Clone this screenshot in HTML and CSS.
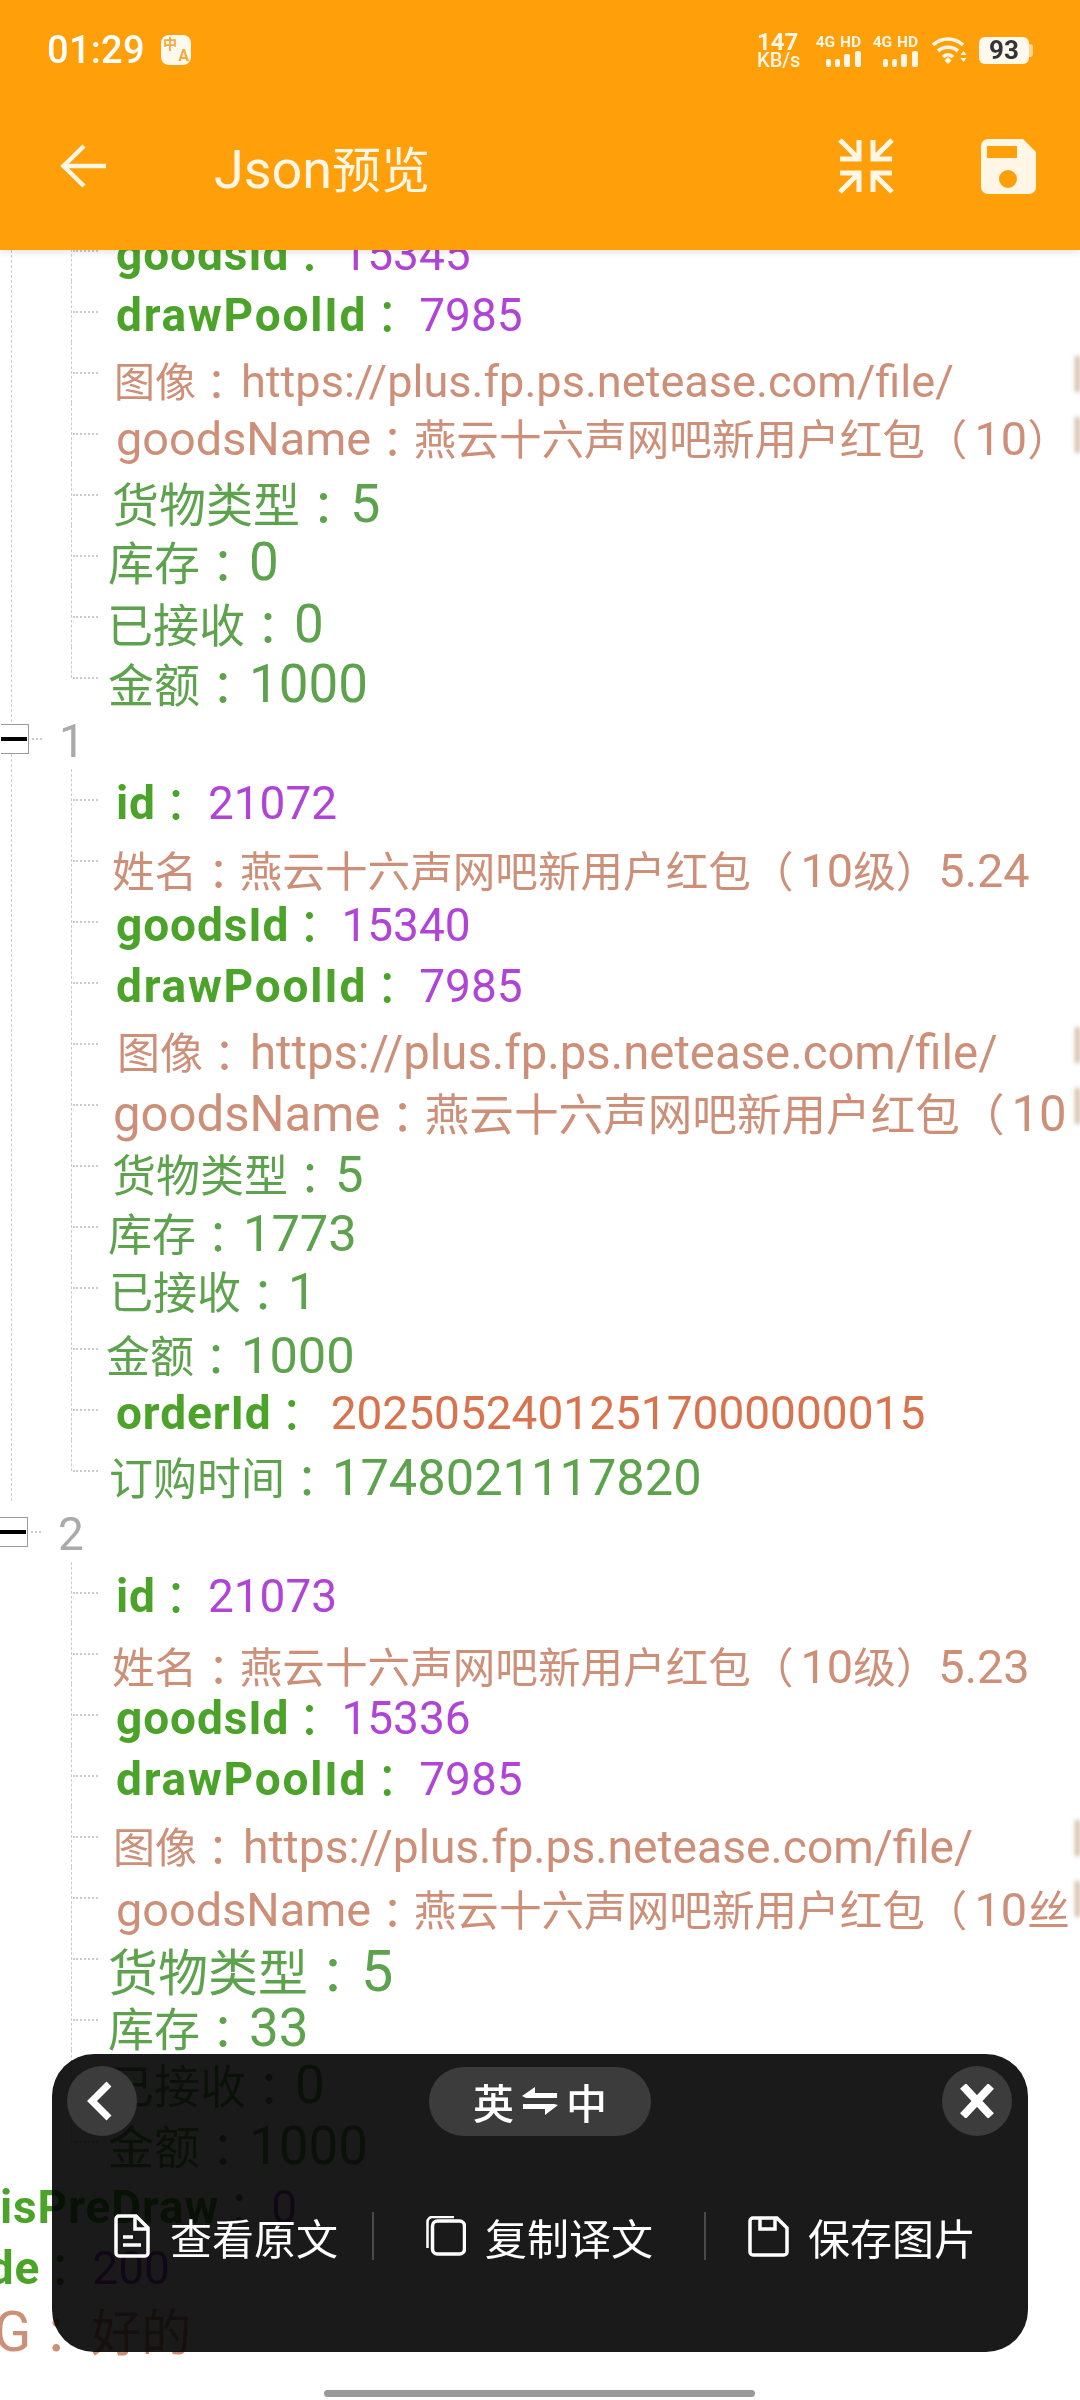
FILE: index.html
```html
<!DOCTYPE html>
<html>
<head>
<meta charset="utf-8">
<title>Json预览</title>
<link rel="stylesheet" href="styles.css">
</head>
<body>
<div class="screen">
  <header class="header">
    <div class="status">
      <span class="time">01:29</span>
      <span class="badge"><i class="bz">中</i><i class="ba">A</i></span>
      <div class="sys">
        <div class="speed"><b>147</b><span>KB/s</span></div>
        <div class="net"><span>4G HD</span>
          <svg class="bars" viewBox="0 0 35 16"><rect x="0" y="8" width="5" height="8" rx="2"/><rect x="9" y="8" width="5" height="8" rx="2"/><rect x="18" y="3" width="6" height="13" rx="2"/><rect x="29" y="0" width="6" height="16" rx="2"/></svg></div>
        <div class="net"><span>4G HD</span>
          <svg class="bars" viewBox="0 0 35 16"><rect x="0" y="8" width="5" height="8" rx="2"/><rect x="9" y="8" width="5" height="8" rx="2"/><rect x="18" y="3" width="6" height="13" rx="2"/><rect x="29" y="0" width="6" height="16" rx="2"/></svg></div>
        <svg class="wifi" viewBox="0 0 37 28"><path d="M2 9C11 1 23 1 32 9M7 15C13 10 21 10 27 15M12 21C15 18 19 18 22 21" fill="none" stroke="#fff6e6" stroke-width="3.6"/><path d="M13.5 24.5 17 21 20.5 24.5 17 28Z" fill="#fff6e6"/><path d="M29.500 19 32.500 15 35.500 19ZM29.500 22 35.500 22 32.500 26Z" fill="#fff6e6"/></svg>
        <div class="batt"><span class="batt-body">93</span><span class="batt-cap"></span></div>
      </div>
    </div>
    <div class="appbar">
      <svg class="ic-back" viewBox="0 0 48 46"><path d="M46 23H4M24 3 3.500 23 24 43" fill="none" stroke="#fff6e6" stroke-width="4.500"/></svg>
      <h1 class="title"><span class="n">Json</span>预览</h1>
      <svg class="ic-compress" viewBox="0 0 56 56"><g fill="none" stroke="#fff6e6" stroke-width="5"><path d="M2 21H21V2M2 2 21 21"/><path d="M54 21H35V2M54 2 35 21"/><path d="M2 35H21V54M2 54 21 35"/><path d="M54 35H35V54M54 54 35 35"/></g></svg>
      <svg class="ic-save" viewBox="0 0 55 55"><path fill-rule="evenodd" fill="#fff6e6" d="M7 0H42L55 13V48A7 7 0 0 1 48 55H7A7 7 0 0 1 0 48V7A7 7 0 0 1 7 0ZM6 7V19H36V7ZM27 31A9 9 0 1 0 27 49 9 9 0 1 0 27 31Z"/></svg>
    </div>
  </header>

  <main class="tree">
    <div class="branch">
      <div class="kids">
        <div class="row p45 d1"><span class="t"><span class="k">goodsId</span><span class="c ck">：</span><span class="v">15345</span></span></div>
        <div class="row p45 d1"><span class="t"><span class="k wide">drawPoolId</span><span class="c ck">：</span><span class="v">7985</span></span></div>
        <div class="row p43 f41 d8 tb"><span class="t">图像<span class="c">：</span><span class="n u">https://plus.fp.ps.netease.com/file/</span></span><span class="edge"></span></div>
        <div class="row p45 f426 d4 tb"><span class="t"><span class="n">goodsName</span><span class="c">：</span>燕云十六声网吧新用户红包（<span class="n lp">10</span>）</span><span class="edge"></span></div>
        <div class="row p41 f47 d8 tg"><span class="t">货物类型<span class="c">：</span><span class="n">5</span></span></div>
        <div class="row p37 f46 d5 tg"><span class="t">库存<span class="c">：</span><span class="n">0</span></span></div>
        <div class="row p36 f46 d6 tg"><span class="t">已接收<span class="c">：</span><span class="n">0</span></span></div>
        <div class="row p37 f46 d5 tg"><span class="t">金额<span class="c">：</span><span class="n">1000</span></span></div>
      </div>
      <div class="node"><span class="box"></span><span class="stub"></span><span class="idx">1</span></div>
      <div class="kids">
        <div class="row p45 d1"><span class="t"><span class="k">id</span><span class="c ck">：</span><span class="v">21072</span></span></div>
        <div class="row p41 f426 d9 tb"><span class="t">姓名<span class="c">：</span>燕云十六声网吧新用户红包（<span class="n lp">10</span>级）<span class="n">5.24</span></span></div>
        <div class="row p45 d1"><span class="t"><span class="k">goodsId</span><span class="c ck">：</span><span class="v">15340</span></span></div>
        <div class="row p45 d1"><span class="t"><span class="k wide">drawPoolId</span><span class="c ck">：</span><span class="v">7985</span></span></div>
        <div class="row p46 f43 d9 tb"><span class="t">图像<span class="c">：</span><span class="n u">https://plus.fp.ps.netease.com/file/</span></span><span class="edge"></span></div>
        <div class="row p42 f446 d9 tb"><span class="t"><span class="n">goodsName</span><span class="c">：</span>燕云十六声网吧新用户红包（<span class="n lp">10</span></span><span class="edge"></span></div>
        <div class="row p41 f44 d8 tg"><span class="t">货物类型<span class="c">：</span><span class="n">5</span></span></div>
        <div class="row p37 f44 d6 tg"><span class="t">库存<span class="c">：</span><span class="n">1773</span></span></div>
        <div class="row p38 f44 d3 tg"><span class="t">已接收<span class="c">：</span><span class="n">1</span></span></div>
        <div class="row p35 f44 d6 tg"><span class="t">金额<span class="c">：</span><span class="n">1000</span></span></div>
        <div class="row p45 d1"><span class="t"><span class="k">orderId</span><span class="c ck">：</span><span class="o">20250524012517000000015</span></span></div>
        <div class="row p38 f44 d6 tg"><span class="t">订购时间<span class="c">：</span><span class="n">1748021117820</span></span></div>
      </div>
    </div>
    <div class="node last"><span class="box"></span><span class="stub"></span><span class="idx">2</span></div>
    <div class="kids top-level">
      <div class="row p45 d1"><span class="t"><span class="k">id</span><span class="c ck">：</span><span class="v">21073</span></span></div>
      <div class="row p41 f426 d12 tb"><span class="t">姓名<span class="c">：</span>燕云十六声网吧新用户红包（<span class="n lp">10</span>级）<span class="n">5.23</span></span></div>
      <div class="row p45 d1"><span class="t"><span class="k">goodsId</span><span class="c ck">：</span><span class="v">15336</span></span></div>
      <div class="row p45 d1"><span class="t"><span class="k wide">drawPoolId</span><span class="c ck">：</span><span class="v">7985</span></span></div>
      <div class="row p42 f42 d9 tb"><span class="t">图像<span class="c">：</span><span class="n u">https://plus.fp.ps.netease.com/file/</span></span><span class="edge"></span></div>
      <div class="row p45 f426 d11 tb"><span class="t"><span class="n">goodsName</span><span class="c">：</span>燕云十六声网吧新用户红包（<span class="n lp">10</span>丝</span><span class="edge"></span></div>
      <div class="row p37 f50 d12 tg"><span class="t">货物类型<span class="c">：</span><span class="n">5</span></span></div>
      <div class="row p37 f46 d7 tg"><span class="t">库存<span class="c">：</span><span class="n">33</span></span></div>
      <div class="row p37 f46 d3 tg"><span class="t">已接收<span class="c">：</span><span class="n">0</span></span></div>
      <div class="row p37 f46 d3 tg"><span class="t">金额<span class="c">：</span><span class="n">1000</span></span></div>
    </div>
    <div class="root-row"><span class="t"><span class="k">isPreDraw</span><span class="c ck">：</span><span class="v">0</span></span></div>
    <div class="root-row clip-code"><span class="t"><span class="k">code</span><span class="c ck">：</span><span class="v">200</span></span></div>
    <div class="root-row clip-msg tb"><span class="t"><span class="n">MSG</span><span class="c cm">：</span>好的</span></div>
  </main>

  <section class="popup">
    <div class="popup-top">
      <span class="round"><svg class="ic-chev" viewBox="0 0 26 40"><path d="M22 3 5 20 22 37" fill="none" stroke="#fff" stroke-width="7"/></svg></span>
      <span class="lang">英<svg class="ic-swap" viewBox="0 0 36 30"><path fill="#fff" d="M0 10 13 1V7H35V12H4ZM36 19 23 29V23H1V18H32Z"/></svg>中</span>
      <span class="round"><svg class="ic-x" viewBox="0 0 34 34"><path d="M3 2 31 32M31 2 3 32" fill="none" stroke="#fff" stroke-width="8"/></svg></span>
    </div>
    <div class="actions">
      <div class="act a1"><svg class="ic-act" viewBox="0 0 36 44"><path d="M5 2H22L34 14V39A3 3 0 0 1 31 42H5A3 3 0 0 1 2 39V5A3 3 0 0 1 5 2ZM21 2V15H34M9 23H19M9 31H27" fill="none" stroke="#fff" stroke-width="3.500"/></svg><span>查看原文</span></div>
      <span class="sep"></span>
      <div class="act a2"><svg class="ic-act copy" viewBox="0 0 40 40"><rect x="6.500" y="5" width="32" height="33" rx="5" fill="none" stroke="#fff" stroke-width="3.500"/><path d="M1.500 32V6A5 5 0 0 1 6.500 1H28" fill="none" stroke="#fff" stroke-width="2.500"/></svg><span>复制译文</span></div>
      <span class="sep"></span>
      <div class="act a3"><svg class="ic-act disk" viewBox="0 0 41 41"><path d="M5 2H29L39 12V36A3 3 0 0 1 36 39H5A3 3 0 0 1 2 36V5A3 3 0 0 1 5 2ZM12 2V13H27V2" fill="none" stroke="#fff" stroke-width="3.500"/></svg><span>保存图片</span></div>
    </div>
  </section>

  <div class="homebar"></div>
</div>
</body>
</html>
```

FILE: styles.css
```css
* { box-sizing: border-box; }
html, body { margin: 0; padding: 0; background: #fff; }
.screen {
  position: relative;
  width: 1080px;
  height: 2400px;
  overflow: hidden;
  background: #fff;
  font-family: Roboto, "Noto Sans CJK SC", sans-serif;
  text-spacing-trim: space-all;
}

/* header */
.header {
  position: relative;
  z-index: 2;
  height: 250px;
  background: #ff9f0a;
  color: #fff6e6;
  box-shadow: 0 3px 6px rgba(0, 0, 0, .1);
}
.status {
  height: 100px;
  display: flex;
  align-items: center;
  padding: 0 47px 0 47px;
}
.time { font-size: 38px; font-weight: 500; color: #fff; letter-spacing: .3px; }
.badge {
  margin-left: 16px;
  width: 30px;
  height: 30px;
  border-radius: 8px;
  background: #fff8ec;
  display: grid;
  grid-template-columns: 1fr 1fr;
  grid-template-rows: 1fr 1fr;
  color: #f6a93c;
  font-weight: 700;
  padding: 3px 2px;
}
.badge i { font-style: normal; line-height: 12px; }
.bz { font-size: 14px; grid-column: 1; grid-row: 1; }
.ba { font-size: 16px; grid-column: 2; grid-row: 2; justify-self: end; }
.sys { margin-left: auto; display: flex; align-items: center; }
.speed { display: flex; flex-direction: column; width: 42px; line-height: 1; margin-top: 0; }
.speed b { font-size: 24px; line-height: 19px; font-weight: 700; }
.speed span { font-size: 20px; line-height: 16px; font-weight: 500; white-space: nowrap; }
.net { display: flex; flex-direction: column; align-items: flex-end; width: 48px; margin-left: 14px; }
.net + .net { margin-left: 9px; }
.net span { font-size: 15.500px; line-height: 16px; font-weight: 700; white-space: nowrap; word-spacing: 1px; }
.bars { width: 35px; height: 16px; fill: #fff6e6; margin-top: 1px; }
.wifi { width: 37px; height: 28px; margin-left: 13px; }
.batt { display: flex; align-items: center; margin-left: 11px; }
.batt-body {
  width: 50px;
  height: 27px;
  border-radius: 6px;
  background: #fff8ec;
  color: #33343a;
  font-size: 26px;
  font-weight: 700;
  line-height: 27px;
  text-align: center;
}
.batt-cap { width: 4px; height: 13px; border-radius: 0 3px 3px 0; background: #ffd68a; }

.appbar { height: 132px; display: flex; align-items: center; padding: 0 44px 0 60px; }
.ic-back { width: 48px; height: 46px; }
.title { margin: 0 0 0 106px; font-size: 49px; font-weight: 400; letter-spacing: 0; }
.ic-compress { width: 56px; height: 56px; margin-left: auto; }
.ic-save { width: 55px; height: 55px; margin-left: 87px; }

/* tree */
.tree { margin-top: -30px; }
.branch { margin-left: 11px; border-left: 1px dashed #ccc; }
.kids { margin-left: 59px; }
.kids.top-level { margin-left: 71px; }
.row {
  position: relative;
  height: 61px;
  display: flex;
  align-items: center;
  white-space: pre;
  font-size: 46px;
  line-height: 1;
}
.t { display: block; padding-top: 3px; }
.n { font-size: 1.1em; }
.u { margin-left: 4px; }
.lp { margin-left: 7px; }
.tg .n { font-size: 1.15em; margin-left: 3px; }
.row::before {
  content: "";
  position: absolute;
  left: 0;
  top: 0;
  height: 100%;
  border-left: 1px dashed #ccc;
}
.row:last-child::before { height: 31px; }
.row::after {
  content: "";
  position: absolute;
  left: 2px;
  top: 30px;
  width: 25px;
  border-top: 2px dotted #ccc;
}
.k { font-weight: 700; color: #4ca32a; letter-spacing: .9px; }
.k.wide { letter-spacing: 1.8px; }
.c { font-family: "Noto Sans CJK TC", sans-serif; font-weight: 400; vertical-align: -3px; }
.ck { color: #4ca32a; margin-right: 9px; margin-left: -3px; }
.cm { margin-right: 10px; }
.v { color: #b044d6; }
.o { color: #d9734e; margin-left: 7px; }
.tb { color: #cd8f78; }
.tg { color: #5da24c; }
.edge {
  position: absolute;
  right: 0;
  top: 14px;
  width: 5px;
  height: 36px;
  background: #d4bba8;
  filter: blur(2px);
}

/* horizontal start offsets */
.p35 { padding-left: 35px; }
.p36 { padding-left: 36px; }
.p37 { padding-left: 37px; }
.p38 { padding-left: 38px; }
.p41 { padding-left: 41px; }
.p42 { padding-left: 42px; }
.p43 { padding-left: 43px; }
.p45 { padding-left: 45px; }
.p46 { padding-left: 46px; }

/* translated text sizes */
.f41 { font-size: 41px; }
.f42 { font-size: 42px; }
.f426 { font-size: 42.6px; }
.f43 { font-size: 43px; }
.f44 { font-size: 44px; }
.f446 { font-size: 44.6px; }
.f46 { font-size: 46px; }
.f47 { font-size: 47px; }
.f50 { font-size: 50px; }

/* translated text vertical drift (top padding shifts the centred line by half) */
.d1 { padding-top: 2px; }
.d3 { padding-top: 6px; }
.d4 { padding-top: 8px; }
.d5 { padding-top: 10px; }
.d6 { padding-top: 12px; }
.d7 { padding-top: 14px; }
.d8 { padding-top: 16px; }
.d9 { padding-top: 18px; }
.d11 { padding-top: 22px; }
.d12 { padding-top: 24px; }

/* array index nodes */
.node { position: relative; height: 61px; margin-left: -11px; display: flex; align-items: center; }
.node.last { margin-left: 0; }
.box {
  width: 28px;
  height: 30px;
  background: linear-gradient(#000, #000) left center / 26px 4px no-repeat #fff;
  border: 1px solid #999;
  border-left: 0;
}
.stub { width: 10px; margin-left: 3px; border-top: 2px dotted #ccc; }
.idx { margin-left: 17px; color: #aaa; font-size: 46px; line-height: 1; padding-top: 4px; }

.root-row { height: 61px; display: flex; align-items: center; font-size: 46px; line-height: 1; white-space: pre; padding-top: 4px; }
.clip-code { margin-left: -64px; }
.clip-msg { margin-left: -87px; font-size: 50px; padding-top: 12px; }

/* bottom popup: the dark layer multiplies over the list, so list text shows darker through it */
.popup {
  position: absolute;
  left: 52px;
  top: 2054px;
  width: 976px;
  height: 298px;
  color: #fff;
  padding: 12px 16px 0 15px;
}
.popup::before {
  content: "";
  position: absolute;
  inset: 0;
  border-radius: 42px;
  background: #1a1a1a;
  mix-blend-mode: multiply;
}
.popup-top { display: flex; justify-content: space-between; align-items: center; height: 70px; position: relative; }
.round {
  width: 70px;
  height: 70px;
  border-radius: 50%;
  background: #3c3c3c;
  display: flex;
  align-items: center;
  justify-content: center;
}
.ic-chev { width: 26px; height: 40px; margin-right: 4px; }
.ic-x { width: 34px; height: 34px; }
.lang {
  width: 222px;
  height: 69px;
  margin-left: 1px;
  border-radius: 35px;
  background: #3c3c3c;
  display: flex;
  align-items: center;
  justify-content: center;
  font-size: 41px;
  font-weight: 500;
}
.ic-swap { width: 36px; height: 30px; margin: 0 8px; }
.actions { display: flex; align-items: center; margin: 76px 0 0 -15px; height: 48px; position: relative; }
.act { display: flex; align-items: center; font-size: 42px; white-space: nowrap; }
.act span { display: block; }
.a1 { margin-left: 62px; gap: 20px; }
.a2 { margin-left: 52px; gap: 19px; margin-right: 17px; }
.a3 { margin-left: 42px; gap: 19px; }
.sep { width: 2px; height: 48px; background: #4a4a4a; margin-left: 34px; }
.ic-act { width: 36px; height: 44px; }
.ic-act.copy { width: 40px; height: 40px; }
.ic-act.disk { width: 41px; height: 41px; }

.homebar {
  position: absolute;
  left: 324px;
  top: 2390px;
  width: 431px;
  height: 7px;
  border-radius: 4px;
  background: #999;
}
```
